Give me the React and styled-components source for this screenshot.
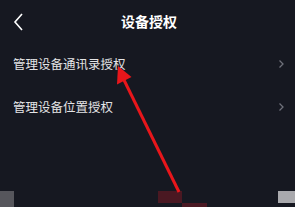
import React from "react";
import styled, { createGlobalStyle } from "styled-components";

const GlobalStyle = createGlobalStyle`
  html, body {
    margin: 0;
    padding: 0;
    background: #161821;
  }
  #root {
    width: 295px;
    height: 207px;
  }
`;

const Screen = styled.div`
  position: relative;
  width: 295px;
  height: 207px;
  overflow: hidden;
  background: #161821;
  display: flex;
  flex-direction: column;
  font-family: "Noto Sans CJK SC", "Noto Sans", sans-serif;
`;

const Header = styled.div`
  height: 42px;
  display: grid;
  grid-template-columns: 40px 1fr 40px;
  align-items: center;
`;

const BackBtn = styled.div`
  display: flex;
  align-items: center;
  padding-left: 13px;
  padding-top: 1px;
`;

const Title = styled.div`
  text-align: center;
  color: #ffffff;
  font-size: 14px;
  font-weight: 700;
  margin-left: 3px;
`;

const List = styled.div`
  display: flex;
  flex-direction: column;
`;

const Row = styled.div`
  height: 43px;
  display: flex;
  align-items: center;
  justify-content: space-between;
  padding: 0 10px 0 13px;
`;

const Label = styled.span`
  color: #e4e4e6;
  font-size: 12.5px;
`;

const BottomBar = styled.div`
  margin-top: auto;
  height: 16px;
  display: flex;
  align-items: stretch;
`;

const Block = styled.div`
  width: ${(p) => p.w}px;
  height: ${(p) => p.h}px;
  background: ${(p) => p.c};
  align-self: ${(p) => p.align || "flex-end"};
`;

const Middle = styled.div`
  display: flex;
  margin-left: 144px;
`;

const Spacer = styled.div`
  flex: 1;
`;

const Overlay = styled.svg`
  position: absolute;
  left: 0;
  top: 0;
  pointer-events: none;
`;

function Chevron() {
  return (
    <svg width="7" height="10" viewBox="0 0 7 10">
      <path d="M1.5 1.5 L5 5 L1.5 8.5" fill="none" stroke="#6f707a" strokeWidth="1.3" />
    </svg>
  );
}

export default function App() {
  return (
    <>
      <GlobalStyle />
      <Screen>
        <Header>
          <BackBtn>
            <svg width="11" height="18" viewBox="0 0 11 18">
              <path d="M9 1 L2 9 L9 17" fill="none" stroke="#ffffff" strokeWidth="1.6" />
            </svg>
          </BackBtn>
          <Title>设备授权</Title>
          <div />
        </Header>
        <List>
          <Row>
            <Label>管理设备通讯录授权</Label>
            <Chevron />
          </Row>
          <Row>
            <Label>管理设备位置授权</Label>
            <Chevron />
          </Row>
        </List>
        <BottomBar>
          <Block w={14} h={16} c="#56565c" />
          <Middle>
            <Block w={24} h={12} c="#4a1822" align="flex-start" />
            <Block w={25} h={4} c="#4a1822" />
          </Middle>
          <Spacer />
          <Block w={17} h={12} c="#a9a9ad" align="flex-start" />
        </BottomBar>
        <Overlay width="295" height="207" viewBox="0 0 295 207">
          <line x1="179" y1="192" x2="123" y2="78" stroke="#e8161b" strokeWidth="3" />
          <polygon points="118,66 131.5,77 117,84.5" fill="#e8161b" />
        </Overlay>
      </Screen>
    </>
  );
}
